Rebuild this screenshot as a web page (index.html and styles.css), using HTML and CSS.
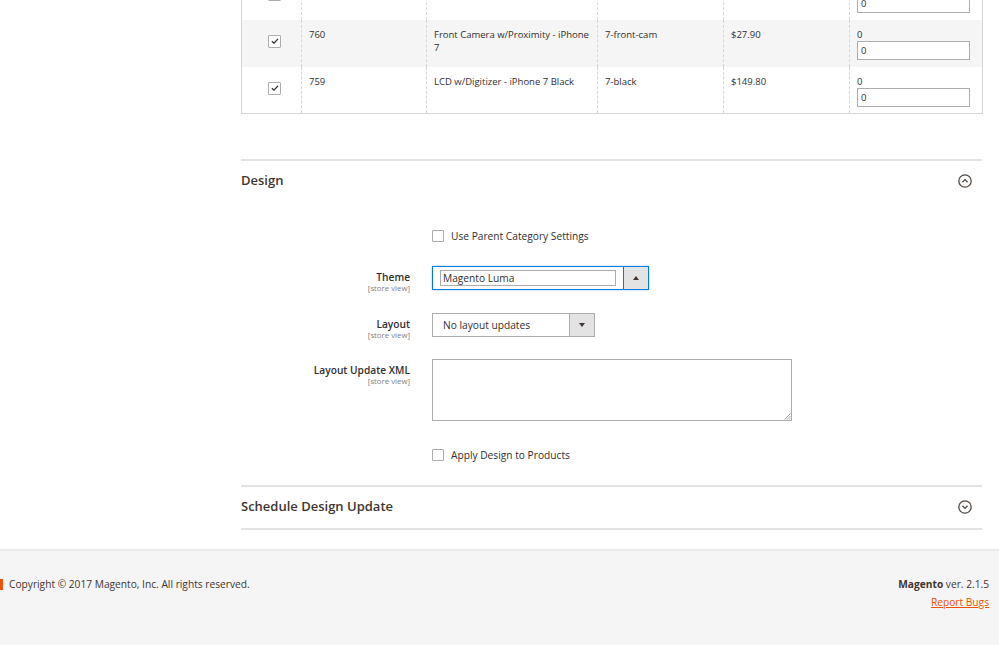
FILE: index.html
```html
<!DOCTYPE html>
<html>
<head>
<meta charset="utf-8">
<link rel="stylesheet" href="styles.css">
</head>
<body>
<div class="page">
  <div class="main">
    <table class="grid">
      <colgroup>
        <col class="c1"><col class="c2"><col class="c3"><col class="c4"><col class="c5"><col class="c6">
      </colgroup>
      <tr class="row">
        <td class="cb-cell"><span class="cb"></span></td>
        <td>761</td>
        <td>Back Cover - iPhone 7</td>
        <td>7-back</td>
        <td>$19.90</td>
        <td><div class="pos">0</div><div class="inp">0</div></td>
      </tr>
      <tr class="row alt">
        <td class="cb-cell"><span class="cb"><svg viewBox="0 0 12 12" width="10" height="10"><path d="M2.2 6.2 L4.8 8.6 L9.6 3.4" fill="none" stroke="#303030" stroke-width="1.6"/></svg></span></td>
        <td>760</td>
        <td>Front Camera w/Proximity - iPhone 7</td>
        <td>7-front-cam</td>
        <td>$27.90</td>
        <td><div class="pos">0</div><div class="inp">0</div></td>
      </tr>
      <tr class="row last">
        <td class="cb-cell"><span class="cb"><svg viewBox="0 0 12 12" width="10" height="10"><path d="M2.2 6.2 L4.8 8.6 L9.6 3.4" fill="none" stroke="#303030" stroke-width="1.6"/></svg></span></td>
        <td>759</td>
        <td>LCD w/Digitizer - iPhone 7 Black</td>
        <td>7-black</td>
        <td>$149.80</td>
        <td><div class="pos">0</div><div class="inp">0</div></td>
      </tr>
    </table>

    <section class="fieldset design">
      <div class="fs-head">
        <h2 class="fs-title">Design</h2>
        <svg class="fs-icon" viewBox="0 0 14 14" width="14" height="14"><circle cx="7" cy="7" r="6.2" fill="none" stroke="#514943" stroke-width="1.3"/><path d="M4.4 8.2 L7 5.6 L9.6 8.2" fill="none" stroke="#514943" stroke-width="1.3"/></svg>
      </div>
      <div class="fs-body">
        <div class="field f-check">
          <div class="lbl"></div>
          <div class="ctl check"><span class="cb"></span><span class="check-text">Use Parent Category Settings</span></div>
        </div>
        <div class="field f-theme">
          <div class="lbl"><span class="lbl-main">Theme</span><span class="scope">[store view]</span></div>
          <div class="ctl">
            <div class="select active"><div class="sel-inner"><span class="sel-field">Magento Luma</span></div><div class="sel-btn"><span class="tri-up"></span></div></div>
          </div>
        </div>
        <div class="field f-layout">
          <div class="lbl"><span class="lbl-main">Layout</span><span class="scope">[store view]</span></div>
          <div class="ctl">
            <div class="select plain"><div class="sel-inner"><span class="sel-text">No layout updates</span></div><div class="sel-btn"><span class="tri-down"></span></div></div>
          </div>
        </div>
        <div class="field f-xml">
          <div class="lbl"><span class="lbl-main">Layout Update XML</span><span class="scope">[store view]</span></div>
          <div class="ctl">
            <div class="textarea"><svg class="grip" viewBox="0 0 8 8" width="8" height="8"><path d="M7.5 1.5 L1.5 7.5 M7.5 4 L4 7.5 M7.5 6.3 L6.3 7.5" stroke="#888" stroke-width="0.8"/></svg></div>
          </div>
        </div>
        <div class="field f-apply">
          <div class="lbl"></div>
          <div class="ctl check"><span class="cb"></span><span class="check-text">Apply Design to Products</span></div>
        </div>
      </div>
    </section>

    <section class="fieldset schedule">
      <div class="fs-head">
        <h2 class="fs-title">Schedule Design Update</h2>
        <svg class="fs-icon" viewBox="0 0 14 14" width="14" height="14"><circle cx="7" cy="7" r="6.2" fill="none" stroke="#514943" stroke-width="1.3"/><path d="M4.4 5.8 L7 8.4 L9.6 5.8" fill="none" stroke="#514943" stroke-width="1.3"/></svg>
      </div>
    </section>
  </div>

  <footer class="footer">
    <div class="copy"><span class="mark"></span>Copyright © 2017 Magento, Inc. All rights reserved.</div>
    <div class="ver">
      <div><b>Magento</b> ver. 2.1.5</div>
      <a class="bugs" href="#">Report Bugs</a>
    </div>
  </footer>
</div>
</body>
</html>
```

FILE: styles.css
```css
html, body {
  margin: 0;
  padding: 0;
  background: #fff;
}
body {
  font-family: "Open Sans", "Noto Sans", sans-serif;
  color: #303030;
  font-size: 10.2px;
  width: 999px;
  height: 645px;
  overflow: hidden;
}
.page {
  display: flex;
  flex-direction: column;
}
.main {
  margin: -28px 17px 0 241px;
}

/* table */
.grid {
  width: 741px;
  border-collapse: collapse;
  table-layout: fixed;
  border: 1px solid #d6d6d6;
  font-size: 9.5px;
}
.c1 { width: 60px; }
.c2 { width: 125px; }
.c3 { width: 171px; }
.c4 { width: 126px; }
.c5 { width: 126px; }
.c6 { width: 133px; }
.row { height: 47px; }
.row.last { height: 46px; }
.row.alt { background: #f5f5f5; }
.row td {
  vertical-align: top;
  padding: 8px 7px 6px 7px;
  line-height: 13px;
  border-left: 1px dashed #d6d6d6;
}
.row td:first-child { border-left: none; }
.row td.cb-cell {
  padding: 15px 0 0 26px;
}
.cb {
  display: inline-flex;
  align-items: center;
  justify-content: center;
  width: 11px;
  height: 11px;
  border: 1px solid #adadad;
  background: #fff;
  border-radius: 1px;
  box-sizing: content-box;
  vertical-align: top;
}
.pos { line-height: 13px; }
.inp {
  width: 113px;
  height: 19px;
  box-sizing: border-box;
  border: 1px solid #adadad;
  background: #fff;
  padding: 0 3px;
  line-height: 17px;
}

/* fieldsets */
.fieldset {
  border-top: 2px solid #e3e3e3;
}
.design { margin-top: 45px; }
.fs-head {
  display: flex;
  align-items: center;
  justify-content: space-between;
  height: 38px;
  padding-bottom: 4px;
}
.fs-title {
  margin: 0;
  font-size: 13px;
  font-weight: 600;
  color: #41362f;
}
.fs-icon {
  margin-right: 10px;
  margin-top: 2px;
}
.fs-body {
  padding: 27px 0 23px 0;
}
.field {
  display: grid;
  grid-template-columns: 169px 1fr;
  column-gap: 22px;
  align-items: start;
}
.f-check { height: 36px; }
.f-theme { height: 47px; }
.f-layout { height: 46px; }
.f-xml { height: 90px; }
.f-apply { height: 13px; }
.lbl {
  display: flex;
  flex-direction: column;
  align-items: flex-end;
  padding-top: 5px;
}
.lbl-main {
  font-weight: 600;
  font-size: 10.2px;
  line-height: 13px;
  color: #303030;
}
.scope {
  font-size: 7.8px;
  line-height: 9px;
  color: #808080;
}
.check {
  display: flex;
  align-items: center;
  height: 13px;
}
.check .cb { width: 10px; height: 10px; }
.check-text {
  margin-left: 7px;
  color: #303030;
}

/* selects */
.select {
  display: flex;
  height: 24px;
  box-sizing: border-box;
  border: 1px solid #adadad;
  background: #fff;
}
.select.active {
  width: 217px;
  border-color: #007bdb;
  box-shadow: 0 0 2px rgba(0, 123, 219, 0.4);
}
.select.plain { width: 163px; }
.sel-inner {
  flex: 1;
  display: flex;
  align-items: center;
}
.sel-field {
  margin-left: 7px;
  width: 176px;
  height: 16px;
  box-sizing: border-box;
  border: 1px solid #adadad;
  padding-left: 2px;
  line-height: 14px;
}
.sel-text { margin-left: 10px; }
.sel-btn {
  width: 24px;
  background: #e3e3e3;
  border-left: 1px solid #adadad;
  display: flex;
  align-items: center;
  justify-content: center;
}
.active .sel-btn { border-left-color: #007bdb; }
.tri-up {
  width: 0; height: 0;
  border-left: 3px solid transparent;
  border-right: 3px solid transparent;
  border-bottom: 4px solid #41362f;
}
.tri-down {
  width: 0; height: 0;
  border-left: 3px solid transparent;
  border-right: 3px solid transparent;
  border-top: 4px solid #41362f;
}
.textarea {
  width: 360px;
  height: 62px;
  box-sizing: border-box;
  border: 1px solid #adadad;
  display: flex;
  align-items: flex-end;
  justify-content: flex-end;
}
.grip { display: block; }

.schedule .fs-head {
  border-bottom: 2px solid #e3e3e3;
  height: 38px;
  padding-bottom: 3px;
}

/* footer */
.footer {
  margin-top: 19px;
  border-top: 2px solid #ebebeb;
  background: #f5f5f5;
  height: 120px;
  display: flex;
  justify-content: space-between;
  padding: 27px 10px 0 0;
  color: #303030;
}
.copy {
  display: flex;
  align-items: center;
  height: 13px;
  color: #41362f;
}
.mark {
  width: 3px;
  height: 11px;
  background: #eb5202;
  margin-right: 6px;
}
.ver {
  text-align: right;
  line-height: 18px;
  margin-top: -3px;
  color: #41362f;
}
.ver b { font-weight: 700; }
.bugs {
  color: #eb5202;
  text-decoration: underline;
}
```
